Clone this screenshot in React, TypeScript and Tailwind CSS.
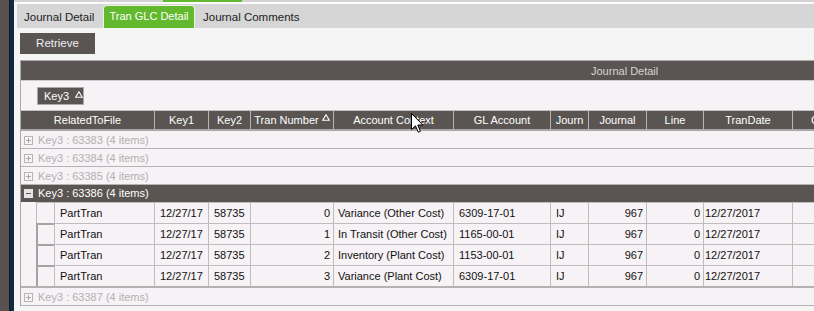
import React from "react";

const DARK = "bg-[#5a5552]";

function Tri({ className = "" }: { className?: string }) {
  return (
    <svg width="8" height="7" viewBox="0 0 8 7" className={className}>
      <path d="M4 0.8 L7.3 6.2 L0.7 6.2 Z" fill="none" stroke="#ffffff" strokeWidth="1.1" />
    </svg>
  );
}

function PlusBox() {
  return (
    <div className="relative w-[9px] h-[9px] border border-[#b4b4b4] bg-[#f7f3f6]">
      <div className="absolute left-[1px] top-[3px] w-[5px] h-[1px] bg-[#a8a8a8]" />
      <div className="absolute left-[3px] top-[1px] w-[1px] h-[5px] bg-[#a8a8a8]" />
    </div>
  );
}

function MinusBox() {
  return (
    <div className="relative w-[9px] h-[9px] bg-[#e4e4e4]">
      <div className="absolute left-[2px] top-[4px] w-[5px] h-[1px] bg-[#5a5552]" />
    </div>
  );
}

function GroupRow({ label }: { label: string }) {
  return (
    <div className="h-[18px] flex items-center border-b border-[#b4b4b4] bg-[#f6f2f5] pl-[3px] pt-[1px]">
      <PlusBox />
      <span className="ml-[5px] text-[11px] text-[#b2b0b1] leading-none">{label}</span>
    </div>
  );
}

const rows = [
  ["0", "Variance (Other Cost)", "6309-17-01"],
  ["1", "In Transit (Other Cost)", "1165-00-01"],
  ["2", "Inventory (Plant Cost)", "1153-00-01"],
  ["3", "Variance (Plant Cost)", "6309-17-01"],
];

export default function App() {
  return (
    <div
      className="relative w-[814px] h-[311px] overflow-hidden flex bg-[#f5f5f5]"
      style={{ fontFamily: '"Liberation Sans", Arial, sans-serif' }}
    >
      {/* left edge */}
      <div className="w-[9px] h-full bg-[#57524f] shrink-0" />
      <div className="w-[5px] h-full bg-[#0e2b40] border-l border-[#1a1a1a] shrink-0" />

      <div className="flex-1 flex flex-col min-w-0">
        {/* top strip */}
        <div className="h-[2px] bg-[#d4d2d2] flex">
          <div className="ml-[149px] w-[79px] h-full bg-[#62b92e]" />
        </div>
        <div className="h-[2px] bg-[#fbfbfb]" />

        {/* tab bar */}
        <div className="ml-[3px] h-[24px] bg-[#d6d6d6] flex items-end">
          <div className="w-[86px] h-[23px] flex items-center pl-[7px] pt-[2px] text-[11.5px] text-[#1c1c1c]">
            Journal Detail
          </div>
          <div className="w-[92px] h-[23px] rounded-t-[4px] bg-[#62b92e] border border-b-0 border-[#eaf6e2] flex items-center justify-center text-[11px] text-white pb-[2px]">
            Tran GLC Detail
          </div>
          <div className="h-[23px] flex items-center pl-[8px] pt-[2px] text-[11.5px] text-[#1c1c1c]">
            Journal Comments
          </div>
        </div>

        {/* content */}
        <div className="pl-[6px] pt-[5px] flex flex-col">
          <div className={`w-[75px] h-[21px] ${DARK} flex items-center justify-center text-[11.5px] text-[#eeeef8]`}>
            Retrieve
          </div>

          {/* grid */}
          <div className="mt-[6px] border-t border-l border-[#aaa8a8] w-[900px] bg-[#f6f2f5]">
            <div className={`h-[19px] ${DARK} flex items-center pl-[570px] pt-[1px] text-[11px] text-[#d6d4d4]`}>
              Journal Detail
            </div>
            <div className="h-[31px] border-t border-[#cfcbcd] border-b border-b-[#c2bfc1] bg-[#f6f2f5] pl-[16px] pt-[6px]">
              <div className={`w-[47px] h-[18px] ${DARK} border border-[#a9a9a9] flex items-center pl-[6px] text-[11px] text-white`}>
                Key3
                <Tri className="ml-[6px] -mt-[4px]" />
              </div>
            </div>

            {/* header row */}
            <div className={`h-[18px] ${DARK} flex text-[11px] text-white border-b-2 border-[#a9a7a7] box-content`}>
              <div className="w-[133px] flex items-center justify-center">RelatedToFile</div>
              <div className="w-[54px] border-l border-[#b8b4b2] flex items-center justify-center">Key1</div>
              <div className="w-[42px] border-l border-[#b8b4b2] flex items-center justify-center">Key2</div>
              <div className="w-[83px] border-l border-[#b8b4b2] flex items-center justify-center">
                Tran Number
                <Tri className="ml-[3px] -mt-[5px]" />
              </div>
              <div className="w-[120px] border-l border-[#b8b4b2] flex items-center justify-center">Account Context</div>
              <div className="w-[97px] border-l border-[#b8b4b2] flex items-center justify-center">GL Account</div>
              <div className="w-[38px] border-l border-[#b8b4b2] flex items-center justify-center">Journ</div>
              <div className="w-[58px] border-l border-[#b8b4b2] flex items-center justify-center">Journal</div>
              <div className="w-[57px] border-l border-[#b8b4b2] flex items-center justify-center">Line</div>
              <div className="w-[89px] border-l border-[#b8b4b2] flex items-center justify-center">TranDate</div>
              <div className="w-[100px] border-l border-[#b8b4b2] flex items-center pl-[18px]">Comments</div>
            </div>

            <GroupRow label="Key3 : 63383 (4 items)" />
            <GroupRow label="Key3 : 63384 (4 items)" />
            <GroupRow label="Key3 : 63385 (4 items)" />

            {/* expanded group */}
            <div className={`h-[17px] ${DARK} flex items-center pl-[3px]`}>
              <MinusBox />
              <span className="ml-[5px] text-[11px] text-white leading-none">Key3 : 63386 (4 items)</span>
            </div>

            {rows.map((r, i) => (
              <div key={i} className="h-[21px] flex text-[11px] text-[#111]">
                <div className="w-[15px]" />
                <div
                  className={`w-[18px] border-t border-l ${
                    i === 0 ? "border-[#bdbdbd]" : "border-t-2 border-l-2 border-[#a3a3a3]"
                  }`}
                />
                <div className="w-[100px] border-t border-l border-[#bdbdbd] flex items-center pl-[5px]">PartTran</div>
                <div className="w-[54px] border-t border-l border-[#bdbdbd] flex items-center pl-[5px]">12/27/17</div>
                <div className="w-[42px] border-t border-l border-[#bdbdbd] flex items-center pl-[5px]">58735</div>
                <div className="w-[83px] border-t border-l border-[#bdbdbd] flex items-center justify-end pr-[3px]">{r[0]}</div>
                <div className="w-[120px] border-t border-l border-[#bdbdbd] flex items-center pl-[4px] whitespace-nowrap overflow-hidden">{r[1]}</div>
                <div className="w-[97px] border-t border-l border-[#bdbdbd] flex items-center pl-[5px]">{r[2]}</div>
                <div className="w-[38px] border-t border-l border-[#bdbdbd] flex items-center pl-[5px]">IJ</div>
                <div className="w-[58px] border-t border-l border-[#bdbdbd] flex items-center justify-end pr-[3px]">967</div>
                <div className="w-[57px] border-t border-l border-[#bdbdbd] flex items-center justify-end pr-[3px]">0</div>
                <div className="w-[89px] border-t border-l border-[#bdbdbd] flex items-center pl-[1px]">12/27/2017</div>
                <div className="w-[100px] border-t border-l border-[#bdbdbd]" />
              </div>
            ))}
            <div className="h-[2px] bg-[#b4b2b2]" />

            <GroupRow label="Key3 : 63387 (4 items)" />
          </div>
        </div>
      </div>

      {/* mouse cursor */}
      <svg
        className="absolute left-[411px] top-[113px]"
        width="13"
        height="21"
        viewBox="0 0 13 21"
      >
        <path
          d="M0.5 0.5 L0.5 16.5 L4.5 12.8 L7.2 19.2 L9.4 18.3 L6.8 12 L11.8 12 Z"
          fill="#ffffff"
          stroke="#000000"
          strokeWidth="1"
          strokeLinejoin="miter"
        />
      </svg>
    </div>
  );
}
